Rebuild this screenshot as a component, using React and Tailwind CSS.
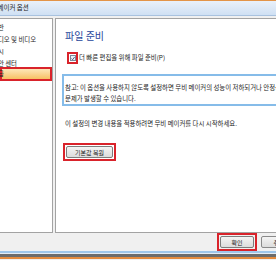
const font = { fontFamily: '"Noto Sans CJK KR", "Noto Sans", sans-serif' };

function NavItem({ label, selected }) {
  if (selected) {
    return (
      <div className="h-[14px] w-[52px] border-2 border-[#d9232b] bg-gradient-to-b from-[#fde7b8] to-[#f7c061] flex items-center">
        <span className="ml-[-10px] whitespace-nowrap">{label}</span>
      </div>
    );
  }
  return (
    <div className="h-[12px] flex items-center">
      <span className="ml-[-8px] whitespace-nowrap">{label}</span>
    </div>
  );
}

export default function App() {
  return (
    <div
      className="w-[276px] h-[260px] overflow-hidden bg-[#f0f0f0] flex flex-col text-[6.4px] text-[#222]"
      style={font}
    >
      <div className="h-[1px] bg-[#e39448]" />
      <div className="h-[15px] bg-gradient-to-b from-[#eaf1fa] to-[#cfe0f3] border-b border-[#a8c2df] flex items-center">
        <span className="ml-[-16px] text-[6.5px] whitespace-nowrap text-[#1b1b1b]">무비 메이커 옵션</span>
      </div>

      <div className="flex pt-[2px] gap-[2px] h-[217px]">
        <div className="w-[53px] h-[215px] bg-white border border-l-0 border-[#a3a3a3] flex flex-col pt-[3px]">
          <NavItem label="일반" />
          <NavItem label="오디오 및 비디오" />
          <NavItem label="게시" />
          <NavItem label="보안 센터" />
          <div className="mt-[-3px]">
            <NavItem label="고급" selected />
          </div>
        </div>

        <div className="flex-1 mr-[-6px] h-[215px] bg-white border border-[#a3a3a3] pl-[9px] pt-[11px] flex flex-col">
          <div className="h-[12px] leading-[12px] text-[10px] text-[#26449a] whitespace-nowrap">파일 준비</div>

          <div className="mt-[10px] flex items-center h-[12px] whitespace-nowrap">
            <div className="ml-[2px] w-[11px] h-[12px] border-2 border-[#d9232b] flex items-center justify-center">
              <div className="w-[6px] h-[6px] border border-[#7a8a9a] bg-[#eef3f8] flex items-center justify-center">
                <svg width="5" height="5" viewBox="0 0 5 5">
                  <path d="M0.6 2.5 L2 4 L4.5 0.7" fill="none" stroke="#2b3f6a" strokeWidth="1" />
                </svg>
              </div>
            </div>
            <span className="ml-[1px]">더 빠른 편집을 위해 파일 준비(P)</span>
          </div>

          <div className="mt-[10px] ml-[-3px] border-2 border-[#86bce9] pl-[1px] pt-[6px] leading-[11px] whitespace-nowrap">
            <div>참고: 이 옵션을 사용하지 않도록 설정하면 무비 메이커의 성능이 저하되거나 안정성에</div>
            <div>문제가 발생할 수 있습니다.</div>
          </div>

          <div className="mt-[12px] leading-[11px] whitespace-nowrap">
            이 설정의 변경 내용을 적용하려면 무비 메이커를 다시 시작하세요.
          </div>

          <div className="mt-[14px] ml-[-2px] self-start border-2 border-[#d9232b] p-[1px]">
            <div className="w-[47px] h-[12px] border border-[#7d7d7d] rounded-[2px] bg-gradient-to-b from-[#f4f4f4] to-[#dcdcdc] flex items-center justify-center text-[6px] whitespace-nowrap">
              기본값 복원
            </div>
          </div>
        </div>
      </div>

      <div className="h-[18px] flex items-start pl-[217px] gap-[4px]">
        <div className="border-2 border-[#d9232b] p-[1px]">
          <div className="w-[34px] h-[12px] border border-[#7d7d7d] rounded-[2px] bg-gradient-to-b from-[#f4f4f4] to-[#dcdcdc] flex items-center justify-center text-[6px]">
            확인
          </div>
        </div>
        <div className="mt-[3px] shrink-0 w-[36px] h-[12px] border border-[#8a8a8a] rounded-[2px] bg-gradient-to-b from-[#f4f4f4] to-[#dcdcdc] flex items-center justify-center text-[6px]">
          취소
        </div>
      </div>

      <div className="h-[2px] bg-[#9fc6ea]" />
      <div className="h-[1px] bg-[#e3ecf5]" />
      <div className="h-[3px] bg-[#6c6c6c]" />
      <div className="h-[2px] bg-[#e48b3d]" />
    </div>
  );
}
